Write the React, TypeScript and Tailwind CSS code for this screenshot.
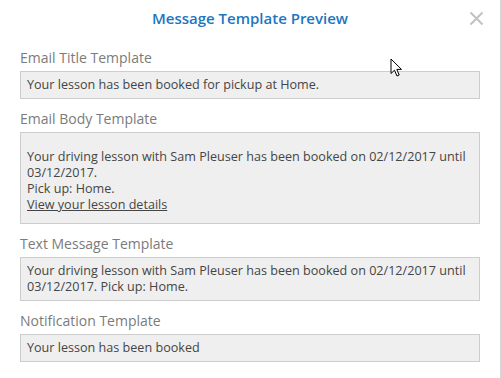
import React from 'react';

function Label({ children }: { children: React.ReactNode }) {
  return <div className="text-[14px] leading-[20px] text-[#7b7b7b] mb-[3px]">{children}</div>;
}

function Box({ children, className = '' }: { children: React.ReactNode; className?: string }) {
  return (
    <div
      className={`border border-[#cdcdcd] bg-[#efefef] px-[6px] text-[12.6px] leading-[16px] text-[#454545] ${className}`}
    >
      {children}
    </div>
  );
}

function Cursor() {
  return (
    <svg className="absolute left-[390px] top-[58px]" width="13" height="20" viewBox="0 0 13 20">
      <path
        d="M1 1 L1 15.5 L4.5 12.2 L7 18 L9.2 17 L6.8 11.4 L11.5 11.4 Z"
        fill="#fff"
        stroke="#000"
        strokeWidth="1"
      />
    </svg>
  );
}

export default function App() {
  return (
    <div
      className="relative h-[378px] w-[501px] bg-white border-r border-[#d6d6d6] overflow-hidden"
      style={{ fontFamily: '"Open Sans", "Liberation Sans", sans-serif' }}
    >
      <div className="relative flex h-[36px] items-center justify-center">
        <h2 className="text-[15px] font-semibold text-[#1d76bf]">Message Template Preview</h2>
        <button className="absolute right-[16px] top-[11px] text-[#c2c2c2]" aria-label="Close">
          <svg width="15" height="15" viewBox="0 0 15 15">
            <path d="M1.5 1.5 L13.5 13.5 M13.5 1.5 L1.5 13.5" stroke="currentColor" strokeWidth="2" />
          </svg>
        </button>
      </div>

      <div className="pl-[20px] pr-[20px] pt-[12px]">
        <Label>Email Title Template</Label>
        <Box className="py-[5px]">Your lesson has been booked for pickup at Home.</Box>

        <div className="mt-[10px]">
          <Label>Email Body Template</Label>
          <Box className="pt-[16px] pb-[10px]">
            <p>Your driving lesson with Sam Pleuser has been booked on 02/12/2017 until 03/12/2017.</p>
            <p>Pick up: Home.</p>
            <p>
              <a className="underline">View your lesson details</a>
            </p>
          </Box>
        </div>

        <div className="mt-[10px]">
          <Label>Text Message Template</Label>
          <Box className="py-[5px]">
            Your driving lesson with Sam Pleuser has been booked on 02/12/2017 until 03/12/2017. Pick up: Home.
          </Box>
        </div>

        <div className="mt-[10px]">
          <Label>Notification Template</Label>
          <Box className="py-[5px]">Your lesson has been booked</Box>
        </div>
      </div>

      <Cursor />
    </div>
  );
}
